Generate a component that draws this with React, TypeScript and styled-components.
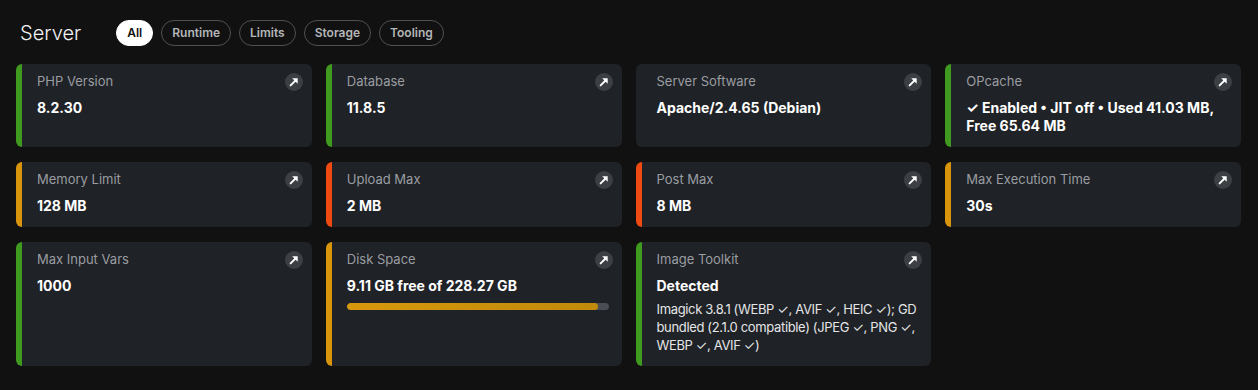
import React from "react";
import styled, { createGlobalStyle } from "styled-components";

const GlobalStyle = createGlobalStyle`
  html, body {
    margin: 0;
    padding: 0;
    background: #111111;
  }
  body {
    font-family: Inter, "Noto Sans", "DejaVu Sans", sans-serif;
    color: #f2f2f2;
  }
`;

type Tone = "green" | "amber" | "red" | "none";

const toneColors: Record<Tone, string> = {
  green: "#3f9a1f",
  amber: "#d8950c",
  red: "#ee4a12",
  none: "#1f2226",
};

const Page = styled.div`
  padding: 20px 17px 22px 16px;
  background: #111111;
  min-height: 348px;
`;

const Header = styled.header`
  display: flex;
  align-items: center;
  height: 26px;
  margin-bottom: 18px;
`;

const Title = styled.h1`
  margin: 0 35px 0 4px;
  font-size: 20px;
  line-height: 26px;
  font-weight: 300;
  color: #f4f4f4;
  letter-spacing: 0;
`;

const Chips = styled.div`
  display: flex;
  gap: 8px;
`;

const Chip = styled.button<{ $active?: boolean }>`
  height: 26px;
  padding: 0 10px;
  border-radius: 13px;
  border: 1px solid ${(p) => (p.$active ? "#ffffff" : "#4e5054")};
  background: ${(p) => (p.$active ? "#ffffff" : "transparent")};
  color: ${(p) => (p.$active ? "#111111" : "#b4b6b9")};
  font-family: Inter, "Noto Sans", sans-serif;
  font-size: 12px;
  font-weight: 600;
  line-height: 24px;
  cursor: pointer;
`;

const Grid = styled.div`
  display: grid;
  grid-template-columns: repeat(4, 1fr);
  column-gap: 14px;
  row-gap: 15px;
  align-items: stretch;
`;

const Card = styled.div<{ $tone: Tone }>`
  position: relative;
  background: #1f2226;
  border-radius: 6px;
  border-left: 6px solid ${(p) => toneColors[p.$tone]};
  padding: 9px 13px 12px 15px;
  min-width: 0;
`;

const Label = styled.div`
  font-size: 13px;
  line-height: 16px;
  color: #9a9da2;
  font-weight: 400;
`;

const Value = styled.div`
  margin-top: 10px;
  font-size: 14px;
  line-height: 18px;
  font-weight: 700;
  color: #ffffff;
`;

const Description = styled.div`
  margin-top: 5px;
  font-size: 13px;
  line-height: 18px;
  color: #e4e5e7;
  letter-spacing: -0.35px;
`;

const Track = styled.div`
  margin-top: 8px;
  height: 7px;
  border-radius: 4px;
  background: #4a4d53;
  overflow: hidden;
`;

const Fill = styled.div`
  height: 100%;
  border-radius: 4px;
  background: linear-gradient(90deg, #d8980c, #c08a0a);
`;

const LinkBadge = styled.span`
  position: absolute;
  top: 9px;
  right: 9px;
  width: 18px;
  height: 18px;
  border-radius: 50%;
  background: #3c3f44;
  display: flex;
  align-items: center;
  justify-content: center;
`;

const ArrowIcon = () => (
  <svg width="10" height="10" viewBox="0 0 10 10" aria-hidden="true">
    <path d="M1.6 8.4 L7 3" stroke="#ffffff" strokeWidth="1.9" strokeLinecap="round" />
    <polygon points="3.2,1.3 8.7,1.3 8.7,6.8" fill="#ffffff" />
  </svg>
);

type Item = {
  label: string;
  value: string;
  tone: Tone;
  description?: string;
  progress?: number;
};

const items: Item[] = [
  { label: "PHP Version", value: "8.2.30", tone: "green" },
  { label: "Database", value: "11.8.5", tone: "green" },
  { label: "Server Software", value: "Apache/2.4.65 (Debian)", tone: "none" },
  {
    label: "OPcache",
    value: "✓ Enabled • JIT off • Used 41.03 MB, Free 65.64 MB",
    tone: "green",
  },
  { label: "Memory Limit", value: "128 MB", tone: "amber" },
  { label: "Upload Max", value: "2 MB", tone: "red" },
  { label: "Post Max", value: "8 MB", tone: "red" },
  { label: "Max Execution Time", value: "30s", tone: "amber" },
  { label: "Max Input Vars", value: "1000", tone: "green" },
  {
    label: "Disk Space",
    value: "9.11 GB free of 228.27 GB",
    tone: "amber",
    progress: (228.27 - 9.11) / 228.27,
  },
  {
    label: "Image Toolkit",
    value: "Detected",
    tone: "green",
    description:
      "Imagick 3.8.1 (WEBP ✓, AVIF ✓, HEIC ✓); GD bundled (2.1.0 compatible) (JPEG ✓, PNG ✓, WEBP ✓, AVIF ✓)",
  },
];

const chips = ["All", "Runtime", "Limits", "Storage", "Tooling"];

export default function App() {
  return (
    <>
      <GlobalStyle />
      <Page>
        <Header>
          <Title>Server</Title>
          <Chips>
            {chips.map((c) => (
              <Chip key={c} $active={c === "All"}>
                {c}
              </Chip>
            ))}
          </Chips>
        </Header>
        <Grid>
          {items.map((it) => (
            <Card key={it.label} $tone={it.tone}>
              <Label>{it.label}</Label>
              <Value>{it.value}</Value>
              {it.progress !== undefined && (
                <Track>
                  <Fill style={{ width: `${it.progress * 100}%` }} />
                </Track>
              )}
              {it.description && <Description>{it.description}</Description>}
              <LinkBadge>
                <ArrowIcon />
              </LinkBadge>
            </Card>
          ))}
        </Grid>
      </Page>
    </>
  );
}
